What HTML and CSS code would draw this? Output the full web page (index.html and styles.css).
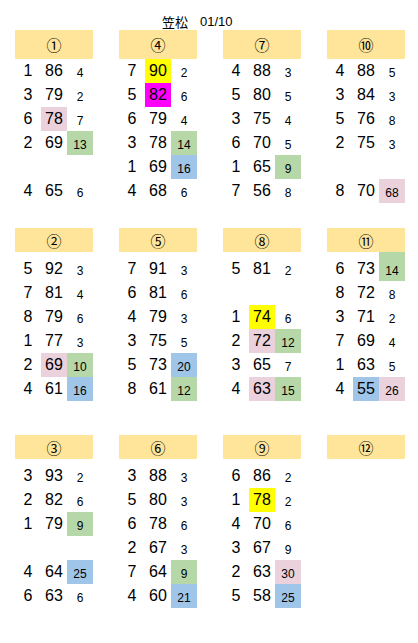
FILE: index.html
```html
<!DOCTYPE html>
<html lang="ja">
<head>
<meta charset="utf-8">
<title>笠松 01/10</title>
<link rel="stylesheet" href="styles.css">
</head>
<body>
<div class="sheet">
  <div class="title"><span class="place">笠松</span><span class="date">01/10</span></div>

  <div class="block b1">
    <div class="group">
      <div class="hd">①</div>
      <div class="row"><span class="c n">1</span><span class="c v">86</span><span class="c s">4</span></div>
      <div class="row"><span class="c n">3</span><span class="c v">79</span><span class="c s">2</span></div>
      <div class="row"><span class="c n">6</span><span class="c v pk">78</span><span class="c s">7</span></div>
      <div class="row"><span class="c n">2</span><span class="c v">69</span><span class="c s gr">13</span></div>
      <div class="row"></div>
      <div class="row"><span class="c n">4</span><span class="c v">65</span><span class="c s">6</span></div>
    </div>
    <div class="group">
      <div class="hd">④</div>
      <div class="row"><span class="c n">7</span><span class="c v ye">90</span><span class="c s">2</span></div>
      <div class="row"><span class="c n">5</span><span class="c v mg">82</span><span class="c s">6</span></div>
      <div class="row"><span class="c n">6</span><span class="c v">79</span><span class="c s">4</span></div>
      <div class="row"><span class="c n">3</span><span class="c v">78</span><span class="c s gr">14</span></div>
      <div class="row"><span class="c n">1</span><span class="c v">69</span><span class="c s bl">16</span></div>
      <div class="row"><span class="c n">4</span><span class="c v">68</span><span class="c s">6</span></div>
    </div>
    <div class="group">
      <div class="hd">⑦</div>
      <div class="row"><span class="c n">4</span><span class="c v">88</span><span class="c s">3</span></div>
      <div class="row"><span class="c n">5</span><span class="c v">80</span><span class="c s">5</span></div>
      <div class="row"><span class="c n">3</span><span class="c v">75</span><span class="c s">4</span></div>
      <div class="row"><span class="c n">6</span><span class="c v">70</span><span class="c s">5</span></div>
      <div class="row"><span class="c n">1</span><span class="c v">65</span><span class="c s gr">9</span></div>
      <div class="row"><span class="c n">7</span><span class="c v">56</span><span class="c s">8</span></div>
    </div>
    <div class="group">
      <div class="hd">⑩</div>
      <div class="row"><span class="c n">4</span><span class="c v">88</span><span class="c s">5</span></div>
      <div class="row"><span class="c n">3</span><span class="c v">84</span><span class="c s">3</span></div>
      <div class="row"><span class="c n">5</span><span class="c v">76</span><span class="c s">8</span></div>
      <div class="row"><span class="c n">2</span><span class="c v">75</span><span class="c s">3</span></div>
      <div class="row"></div>
      <div class="row"><span class="c n">8</span><span class="c v">70</span><span class="c s pk">68</span></div>
    </div>
  </div>

  <div class="block b2">
    <div class="group">
      <div class="hd">②</div>
      <div class="row"><span class="c n">5</span><span class="c v">92</span><span class="c s">3</span></div>
      <div class="row"><span class="c n">7</span><span class="c v">81</span><span class="c s">4</span></div>
      <div class="row"><span class="c n">8</span><span class="c v">79</span><span class="c s">6</span></div>
      <div class="row"><span class="c n">1</span><span class="c v">77</span><span class="c s">3</span></div>
      <div class="row"><span class="c n">2</span><span class="c v pk">69</span><span class="c s gr">10</span></div>
      <div class="row"><span class="c n">4</span><span class="c v">61</span><span class="c s bl">16</span></div>
    </div>
    <div class="group">
      <div class="hd">⑤</div>
      <div class="row"><span class="c n">7</span><span class="c v">91</span><span class="c s">3</span></div>
      <div class="row"><span class="c n">6</span><span class="c v">81</span><span class="c s">6</span></div>
      <div class="row"><span class="c n">4</span><span class="c v">79</span><span class="c s">3</span></div>
      <div class="row"><span class="c n">3</span><span class="c v">75</span><span class="c s">5</span></div>
      <div class="row"><span class="c n">5</span><span class="c v">73</span><span class="c s bl">20</span></div>
      <div class="row"><span class="c n">8</span><span class="c v">61</span><span class="c s gr">12</span></div>
    </div>
    <div class="group">
      <div class="hd">⑧</div>
      <div class="row"><span class="c n">5</span><span class="c v">81</span><span class="c s">2</span></div>
      <div class="row"></div>
      <div class="row"><span class="c n">1</span><span class="c v ye">74</span><span class="c s">6</span></div>
      <div class="row"><span class="c n">2</span><span class="c v pk">72</span><span class="c s gr">12</span></div>
      <div class="row"><span class="c n">3</span><span class="c v">65</span><span class="c s">7</span></div>
      <div class="row"><span class="c n">4</span><span class="c v pk">63</span><span class="c s gr">15</span></div>
    </div>
    <div class="group">
      <div class="hd">⑪</div>
      <div class="row"><span class="c n">6</span><span class="c v">73</span><span class="c s gr">14</span></div>
      <div class="row"><span class="c n">8</span><span class="c v">72</span><span class="c s">8</span></div>
      <div class="row"><span class="c n">3</span><span class="c v">71</span><span class="c s">2</span></div>
      <div class="row"><span class="c n">7</span><span class="c v">69</span><span class="c s">4</span></div>
      <div class="row"><span class="c n">1</span><span class="c v">63</span><span class="c s">5</span></div>
      <div class="row"><span class="c n">4</span><span class="c v bl">55</span><span class="c s pk">26</span></div>
    </div>
  </div>

  <div class="block b3">
    <div class="group">
      <div class="hd">③</div>
      <div class="row"><span class="c n">3</span><span class="c v">93</span><span class="c s">2</span></div>
      <div class="row"><span class="c n">2</span><span class="c v">82</span><span class="c s">6</span></div>
      <div class="row"><span class="c n">1</span><span class="c v">79</span><span class="c s gr">9</span></div>
      <div class="row"></div>
      <div class="row"><span class="c n">4</span><span class="c v">64</span><span class="c s bl">25</span></div>
      <div class="row"><span class="c n">6</span><span class="c v">63</span><span class="c s">6</span></div>
    </div>
    <div class="group">
      <div class="hd">⑥</div>
      <div class="row"><span class="c n">3</span><span class="c v">88</span><span class="c s">3</span></div>
      <div class="row"><span class="c n">5</span><span class="c v">80</span><span class="c s">3</span></div>
      <div class="row"><span class="c n">6</span><span class="c v">78</span><span class="c s">6</span></div>
      <div class="row"><span class="c n">2</span><span class="c v">67</span><span class="c s">3</span></div>
      <div class="row"><span class="c n">7</span><span class="c v">64</span><span class="c s gr">9</span></div>
      <div class="row"><span class="c n">4</span><span class="c v">60</span><span class="c s bl">21</span></div>
    </div>
    <div class="group">
      <div class="hd">⑨</div>
      <div class="row"><span class="c n">6</span><span class="c v">86</span><span class="c s">2</span></div>
      <div class="row"><span class="c n">1</span><span class="c v ye">78</span><span class="c s">2</span></div>
      <div class="row"><span class="c n">4</span><span class="c v">70</span><span class="c s">6</span></div>
      <div class="row"><span class="c n">3</span><span class="c v">67</span><span class="c s">9</span></div>
      <div class="row"><span class="c n">2</span><span class="c v">63</span><span class="c s pk">30</span></div>
      <div class="row"><span class="c n">5</span><span class="c v">58</span><span class="c s bl">25</span></div>
    </div>
    <div class="group">
      <div class="hd">⑫</div>
    </div>
  </div>
</div>
</body>
</html>
```

FILE: styles.css
```css
html, body {
  margin: 0;
  padding: 0;
  background: #ffffff;
}

.sheet {
  font-family: "Liberation Sans", Arial, "Noto Sans CJK JP", sans-serif;
  color: #000000;
  padding-left: 15px;
}

.title {
  height: 30px;
  box-sizing: border-box;
  display: flex;
  align-items: flex-end;
  padding-left: 147px;
  padding-bottom: 1px;
  font-size: 13px;
  line-height: 15px;
}

.title .place {
  font-family: "Noto Sans CJK JP", sans-serif;
  margin-right: 12px;
}

.block {
  display: flex;
  gap: 26px;
}

.b2 { margin-top: 25px; }
.b3 { margin-top: 34px; }

.group {
  width: 78px;
  display: flex;
  flex-direction: column;
}

.hd {
  background: #ffe599;
  height: 24px;
  display: flex;
  align-items: center;
  justify-content: center;
  font-family: "Noto Sans CJK JP", sans-serif;
  font-size: 15px;
  line-height: 1;
}

.b1 .hd { height: 29px; }

.row {
  height: 24px;
  display: flex;
}

.b2 .hd + .row,
.b3 .hd + .row { height: 29px; }

.c {
  width: 26px;
  display: flex;
  align-items: flex-end;
  justify-content: center;
  box-sizing: border-box;
  padding-bottom: 4px;
}

.n, .v {
  font-size: 16px;
  line-height: 16px;
}

.s {
  font-size: 12px;
  line-height: 12px;
}

.pk { background: #ead1dc; }
.gr { background: #b6d7a8; }
.bl { background: #9fc5e8; }
.ye { background: #ffff00; }
.mg { background: #ff00ff; }
```
